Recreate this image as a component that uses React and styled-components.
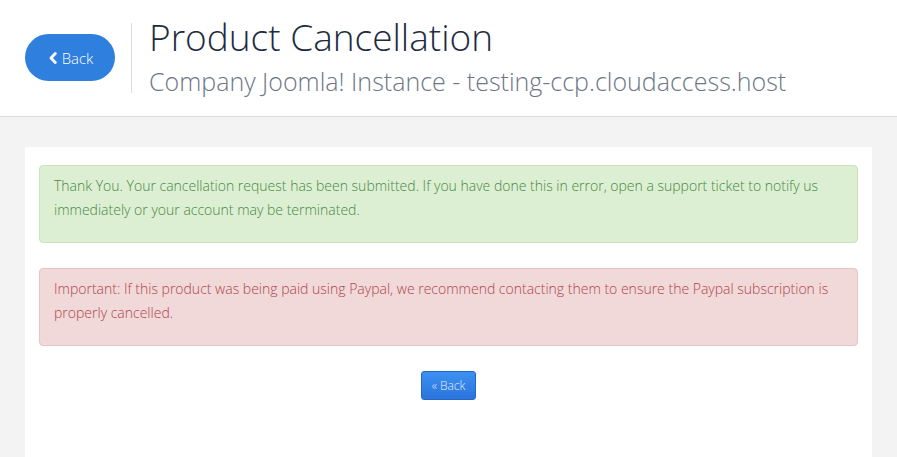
import React from 'react';
import styled, { createGlobalStyle } from 'styled-components';

const GlobalStyle = createGlobalStyle`
  html, body {
    margin: 0;
    padding: 0;
    background: #f3f3f3;
    font-family: 'Open Sans', 'Liberation Sans', sans-serif;
  }
`;

const Page = styled.div`
  height: 457px;
  overflow: hidden;
  background: #f3f3f3;
`;

const Header = styled.header`
  display: flex;
  align-items: center;
  height: 116px;
  padding-left: 25px;
  background: #fff;
  border-bottom: 1px solid #dcdcdc;
`;

const PillButton = styled.button`
  display: flex;
  align-items: center;
  justify-content: center;
  gap: 5px;
  width: 90px;
  height: 47px;
  margin-top: -1px;
  padding: 0 0 0 2px;
  border: none;
  border-radius: 24px;
  background: #2f7fdf;
  color: #fff;
  font-family: inherit;
  font-size: 15px;
  font-weight: 300;
  cursor: pointer;
  svg {
    margin-top: 1px;
  }
`;

const Divider = styled.div`
  width: 1px;
  height: 70px;
  margin: 0 17px 0 16px;
  background: #dcdcdc;
`;

const TitleBlock = styled.div`
  display: flex;
  flex-direction: column;
  margin-top: 2px;
`;

const Title = styled.h1`
  margin: 0;
  font-size: 37px;
  font-weight: 300;
  line-height: 44px;
  color: #1d2b3f;
`;

const Subtitle = styled.h2`
  margin: 0;
  font-size: 25px;
  font-weight: 300;
  line-height: 44px;
  color: #6d7686;
`;

const Main = styled.main`
  padding: 30px 25px 0;
`;

const Card = styled.section`
  display: flex;
  flex-direction: column;
  gap: 25px;
  min-height: 300px;
  padding: 18px 14px;
  background: #fff;
`;

const tones = {
  success: { bg: '#dcefd3', border: '#c8e3b8', color: '#4a8744' },
  danger: { bg: '#f1d8d9', border: '#e8c3c7', color: '#ad474b' },
};

const Alert = styled.div`
  padding: 8px 14px 20px;
  border: 1px solid ${(p) => tones[p.$tone].border};
  border-radius: 4px;
  background: ${(p) => tones[p.$tone].bg};
  color: ${(p) => tones[p.$tone].color};
  font-size: 14px;
  font-weight: 300;
  line-height: 24px;
`;

const Actions = styled.div`
  display: flex;
  justify-content: center;
`;

const SmallButton = styled.button`
  width: 55px;
  height: 29px;
  padding: 0;
  border: 1px solid #2467c9;
  border-radius: 3px;
  background: linear-gradient(#3d90f2, #2a74dc);
  color: #e3eefc;
  font-family: inherit;
  font-size: 12px;
  font-weight: 300;
  cursor: pointer;
`;

const Chevron = () => (
  <svg width="8" height="12" viewBox="0 0 8 12" aria-hidden="true">
    <polyline
      points="6.3,1.5 2,6 6.3,10.5"
      fill="none"
      stroke="currentColor"
      strokeWidth="2.8"
      strokeLinecap="round"
      strokeLinejoin="round"
    />
  </svg>
);

export default function App() {
  return (
    <Page>
      <GlobalStyle />
      <Header>
        <PillButton type="button">
          <Chevron />
          Back
        </PillButton>
        <Divider />
        <TitleBlock>
          <Title>Product Cancellation</Title>
          <Subtitle>Company Joomla! Instance - testing-ccp.cloudaccess.host</Subtitle>
        </TitleBlock>
      </Header>
      <Main>
        <Card>
          <Alert $tone="success">
            Thank You. Your cancellation request has been submitted. If you have done this in error, open a
            support ticket to notify us immediately or your account may be terminated.
          </Alert>
          <Alert $tone="danger">
            Important: If this product was being paid using Paypal, we recommend contacting them to ensure the
            Paypal subscription is properly cancelled.
          </Alert>
          <Actions>
            <SmallButton type="button">« Back</SmallButton>
          </Actions>
        </Card>
      </Main>
    </Page>
  );
}
